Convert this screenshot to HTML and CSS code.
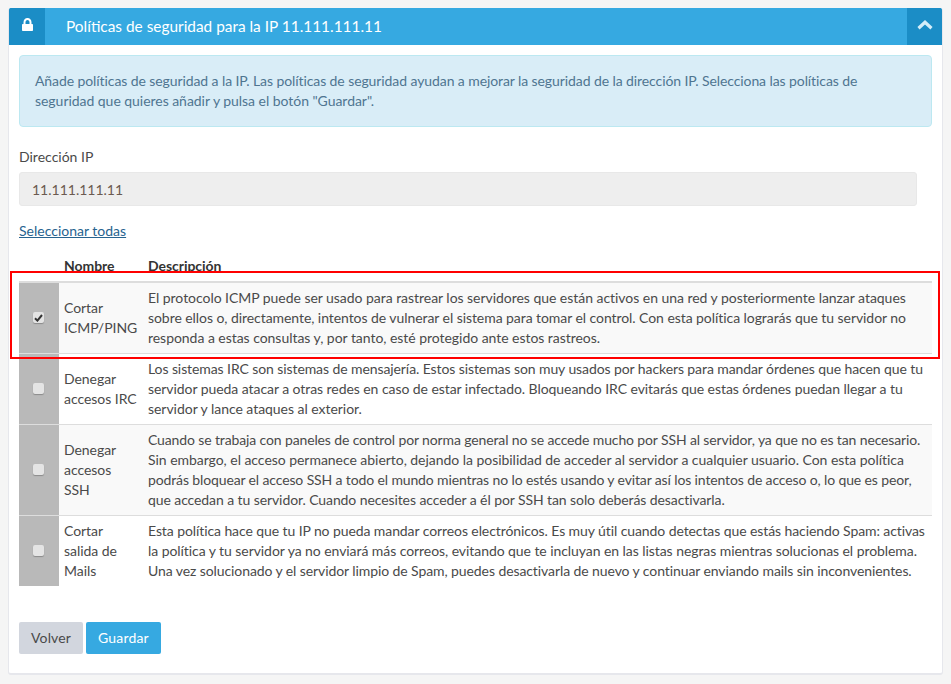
FILE: index.html
```html
<!DOCTYPE html>
<html lang="es">
<head>
    <meta charset="UTF-8">
    <title>Políticas de seguridad</title>
    <link rel="stylesheet" href="styles.css">
</head>
<body>

<div class="panel">
    <div class="panel-head">
        <span class="head-icon">
            <svg width="11" height="13" viewBox="0 0 11 13"><path fill="#fff" d="M1.500 6V4.300C1.500 1.700 3.100 0 5.500 0s4 1.700 4 4.300V6h.7c.5 0 .8.300.8.800v5.400c0 .5-.3.800-.8.800H.8c-.5 0-.8-.3-.8-.8V6.800C0 6.300.3 6 .8 6zm2 0h4V4.300c0-1.500-.8-2.400-2-2.400s-2 .9-2 2.400z"/></svg>
        </span>
        <h1 class="head-title">Políticas de seguridad para la IP 11.111.111.11</h1>
        <span class="head-toggle">
            <svg width="16" height="10" viewBox="0 0 16 10"><path fill="none" stroke="#d3edf9" stroke-width="3.200" d="M1.500 8.300L8 2.300l6.500 6"/></svg>
        </span>
    </div>

    <div class="panel-body">
        <div class="alert">
            <span class="line fit-c">Añade políticas de seguridad a la IP. Las políticas de seguridad ayudan a mejorar la seguridad de la dirección IP. Selecciona las políticas de</span>
            <span class="line fit-a">seguridad que quieres añadir y pulsa el botón "Guardar".</span>
        </div>

        <label class="field-label">Dirección IP</label>
        <div class="field-input">11.111.111.11</div>

        <a class="select-all" href="#">Seleccionar todas</a>

        <div class="table-wrap">
            <table class="policies">
                <thead>
                    <tr>
                        <th class="col-check"></th>
                        <th class="col-name">Nombre</th>
                        <th>Descripción</th>
                    </tr>
                </thead>
                <tbody>
                    <tr class="odd">
                        <td class="cell-check"><span class="check"><svg width="9" height="8" viewBox="0 0 9 8"><path fill="none" stroke="#333" stroke-width="2" d="M1 4.300l2.400 2.300L8 1"/></svg></span></td>
                        <td>Cortar ICMP/PING</td>
                        <td class="cell-desc">
                            <span class="line fit-a">El protocolo ICMP puede ser usado para rastrear los servidores que están activos en una red y posteriormente lanzar ataques</span>
                            <span class="line fit-b">sobre ellos o, directamente, intentos de vulnerar el sistema para tomar el control. Con esta política lograrás que tu servidor no</span>
                            <span class="line fit-a">responda a estas consultas y, por tanto, esté protegido ante estos rastreos.</span>
                        </td>
                    </tr>
                    <tr>
                        <td class="cell-check"><span class="check"></span></td>
                        <td>Denegar accesos IRC</td>
                        <td class="cell-desc">
                            <span class="line fit-c">Los sistemas IRC son sistemas de mensajería. Estos sistemas son muy usados por hackers para mandar órdenes que hacen que tu</span>
                            <span class="line fit-b">servidor pueda atacar a otras redes en caso de estar infectado. Bloqueando IRC evitarás que estas órdenes puedan llegar a tu</span>
                            <span class="line fit-a">servidor y lance ataques al exterior.</span>
                        </td>
                    </tr>
                    <tr class="odd">
                        <td class="cell-check"><span class="check"></span></td>
                        <td>Denegar accesos SSH</td>
                        <td class="cell-desc">
                            <span class="line fit-d">Cuando se trabaja con paneles de control por norma general no se accede mucho por SSH al servidor, ya que no es tan necesario.</span>
                            <span class="line fit-a">Sin embargo, el acceso permanece abierto, dejando la posibilidad de acceder al servidor a cualquier usuario. Con esta política</span>
                            <span class="line fit-d">podrás bloquear el acceso SSH a todo el mundo mientras no lo estés usando y evitar así los intentos de acceso o, lo que es peor,</span>
                            <span class="line fit-c">que accedan a tu servidor. Cuando necesites acceder a él por SSH tan solo deberás desactivarla.</span>
                        </td>
                    </tr>
                    <tr>
                        <td class="cell-check"><span class="check"></span></td>
                        <td>Cortar salida de Mails</td>
                        <td class="cell-desc">
                            <span class="line fit-c">Esta política hace que tu IP no pueda mandar correos electrónicos. Es muy útil cuando detectas que estás haciendo Spam: activas</span>
                            <span class="line fit-b">la política y tu servidor ya no enviará más correos, evitando que te incluyan en las listas negras mientras solucionas el problema.</span>
                            <span class="line fit-c">Una vez solucionado y el servidor limpio de Spam, puedes desactivarla de nuevo y continuar enviando mails sin inconvenientes.</span>
                        </td>
                    </tr>
                </tbody>
            </table>
            <!-- recuadro rojo sobre la primera fila -->
            <div class="highlight"></div>
        </div>

        <div class="actions">
            <a class="btn btn-back" href="#">Volver</a>
            <a class="btn btn-save" href="#">Guardar</a>
        </div>
    </div>
</div>

</body>
</html>
```

FILE: styles.css
```css
* {
    margin: 0;
    padding: 0;
    box-sizing: border-box;
}

body {
    background-color: #f5f5f5;
    font-family: Lato, "Open Sans", sans-serif;
    font-size: 14px;
    line-height: 20px;
    color: #4a4a4a;
    padding: 8px 8px 9px;
}

.panel {
    background-color: #fff;
    border-radius: 3px;
    border: 1px solid #e6e7ec;
    border-width: 0 1px 2px;
    overflow: hidden;
}

.panel-head {
    display: flex;
    align-items: center;
    height: 37px;
    background-color: #36a9e1;
}

.head-icon,
.head-toggle {
    display: flex;
    justify-content: center;
    align-items: center;
    width: 36px;
    height: 37px;
    background-color: #1b8dc6;
}

.head-icon svg {
    margin-bottom: 4px;
}

.head-toggle {
    width: 35px;
}

.head-toggle svg {
    margin-bottom: 3px;
}

.head-title {
    flex: 1;
    padding-left: 21px;
    padding-bottom: 2px;
    font-size: 15.4px;
    font-weight: 400;
    color: #fff;
}

.panel-body {
    padding: 10px 10px 19px;
}

.alert {
    height: 72px;
    padding: 15px 15px;
    background-color: #d9edf7;
    border: 1px solid #bce8f1;
    border-radius: 4px;
    color: #4f7591;
    margin-bottom: 20px;
}

/* cada linea lleva su propio ajuste de ancho */
.line {
    display: block;
    white-space: nowrap;
}

.fit-a {
    letter-spacing: -0.04px;
}

.fit-b {
    letter-spacing: -0.065px;
}

.fit-c {
    letter-spacing: -0.09px;
}

.fit-d {
    letter-spacing: -0.13px;
}

.field-label {
    display: block;
    margin-bottom: 5px;
}

.field-input {
    width: 898px;
    height: 34px;
    padding: 7px 12px;
    background-color: #eee;
    border: 1px solid #e8e8e8;
    border-radius: 3px;
    color: #6b5a50;
    margin-bottom: 15px;
}

.select-all {
    display: inline-block;
    color: #27638f;
    margin-bottom: 10px;
}

.table-wrap {
    position: relative;
}

.policies {
    width: 100%;
    border-collapse: collapse;
    table-layout: fixed;
    letter-spacing: -0.045px;
}

.policies th {
    padding: 5px;
    text-align: left;
    font-weight: 700;
    color: #333;
    border-bottom: 2px solid #ddd;
}

.col-check {
    width: 40px;
}

.col-name {
    width: 84px;
}

.policies td {
    padding: 5px;
    vertical-align: middle;
    border-top: 1px solid #ddd;
}

.policies tbody tr:first-child td {
    border-top: 0;
}

.policies .odd {
    background-color: #f9f9f9;
}

.policies .cell-check {
    background-color: #b9b9b9;
    text-align: center;
    padding: 0;
}

.check {
    display: inline-flex;
    justify-content: center;
    align-items: center;
    width: 11px;
    height: 11px;
    margin: 0 1px 3px 0;
    vertical-align: middle;
    background-color: #e4e4e4;
    border-radius: 2px;
    box-shadow: 0 1px 1px rgba(0, 0, 0, 0.25);
}

.highlight {
    position: absolute;
    left: -9px;
    right: -8px;
    top: 20px;
    height: 88px;
    border: 2px solid #f00;
    pointer-events: none;
}

.actions {
    display: flex;
    gap: 3px;
    margin-top: 36px;
}

.btn {
    display: block;
    height: 32px;
    padding: 6px 12px;
    border-radius: 2px;
    text-decoration: none;
    letter-spacing: 0.15px;
}

.btn-back {
    background-color: #d2d6de;
    color: #4a4a4a;
}

.btn-save {
    background-color: #36a9e1;
    color: #fff;
}
```
